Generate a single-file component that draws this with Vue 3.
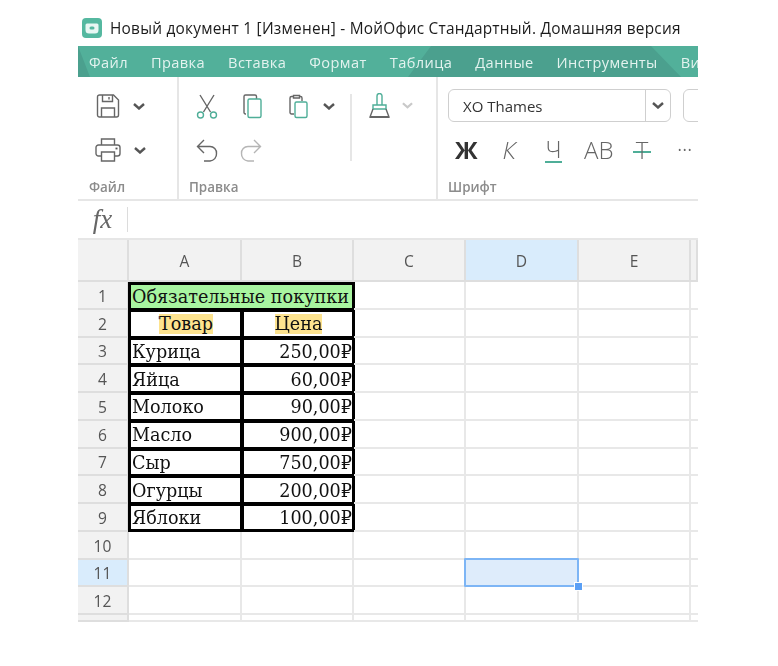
<template>
  <div class="app">
    <header class="titlebar">
      <svg class="logo" width="20" height="20" viewBox="0 0 20 20">
        <rect width="20" height="20" rx="4" fill="#55b8a0" />
        <path d="M5 5.500h10a1.500 1.500 0 0 1 1.500 1.500v5a3.500 3.500 0 0 1-3.500 3.500H7A3.500 3.500 0 0 1 3.500 12V7A1.500 1.500 0 0 1 5 5.500z" fill="#e8f7f3" />
        <rect x="7.500" y="8.500" width="5" height="3" rx="1.500" fill="#55b8a0" />
      </svg>
      <span class="doc-title">Новый документ 1 [Изменен] - МойОфис Стандартный. Домашняя версия</span>
    </header>

    <nav class="menu">
      <span v-for="item in menu" :key="item" class="menu-item">{{ item }}</span>
    </nav>

    <section class="ribbon">
      <div class="group group-file">
        <div class="tools">
          <div class="tool-row">
            <svg class="ic" width="24" height="24" viewBox="0 0 24 24" fill="none" stroke="#666" stroke-width="1.400">
              <path d="M3.500 1h14l5 5v15a2 2 0 0 1-2 2h-17a2 2 0 0 1-2-2V3a2 2 0 0 1 2-2z" />
              <path d="M6.500 1v6.500h10V1M13 3v2.500M5.500 23v-9h13v9" />
            </svg>
            <svg class="chev" width="12" height="7" viewBox="0 0 12 7" fill="none" stroke="#555" stroke-width="2.400"><path d="M1 1l5 4.500L11 1" /></svg>
          </div>
          <div class="tool-row print-row">
            <svg class="ic" width="26" height="24" viewBox="0 0 26 24" fill="none" stroke="#666" stroke-width="1.400">
              <path d="M6.500 7V1h13v6M6 18H3.500A2.500 2.500 0 0 1 1 15.500V9.500A2.500 2.500 0 0 1 3.500 7h19A2.500 2.500 0 0 1 25 9.500v6a2.500 2.500 0 0 1-2.500 2.500H20" />
              <path d="M6.500 14h13v9h-13z" />
              <path d="M20.500 10.500h2" stroke="#555" stroke-width="1.800" />
            </svg>
            <svg class="chev" width="12" height="7" viewBox="0 0 12 7" fill="none" stroke="#555" stroke-width="2.400"><path d="M1 1l5 4.500L11 1" /></svg>
          </div>
        </div>
        <span class="group-label">Файл</span>
      </div>

      <div class="group group-edit">
        <div class="tools edit-tools">
          <div class="edit-main">
            <div class="tool-row">
              <svg class="ic" width="22" height="25" viewBox="0 0 22 25" fill="none" stroke-width="1.400">
                <path d="M4 1l10.500 17M18 1L7.500 18" stroke="#666" />
                <circle cx="4.500" cy="21" r="3" stroke="#4fae98" />
                <circle cx="17.500" cy="21" r="3" stroke="#4fae98" />
              </svg>
              <svg class="ic copy-ic" width="19" height="25" viewBox="0 0 19 25" fill="none" stroke-width="1.400">
                <path d="M3 20H2.500A1.500 1.500 0 0 1 1 18.500V2.500A1.500 1.500 0 0 1 2.500 1H12a1.500 1.500 0 0 1 1.500 1.500V5" stroke="#666" />
                <rect x="5" y="5" width="13" height="18.500" rx="1.500" stroke="#4fae98" />
              </svg>
              <svg class="ic paste-ic" width="19" height="26" viewBox="0 0 19 26" fill="none" stroke-width="1.400">
                <path d="M5 21H2.500A1.500 1.500 0 0 1 1 19.500V5a1.500 1.500 0 0 1 1.500-1.500H5M10 3.500h1.500A1.500 1.500 0 0 1 13 5v3" stroke="#666" />
                <path d="M4.500 5V2.500h6V5z" stroke="#666" />
                <rect x="6" y="9" width="12" height="15.500" rx="1.500" stroke="#4fae98" />
              </svg>
              <svg class="chev paste-chev" width="12" height="7" viewBox="0 0 12 7" fill="none" stroke="#555" stroke-width="2.400"><path d="M1 1l5 4.500L11 1" /></svg>
            </div>
            <div class="tool-row">
              <svg class="ic" width="22" height="23" viewBox="0 0 22 23" fill="none" stroke="#666" stroke-width="1.400">
                <path d="M8 1L1.500 7.500 8 14M1.500 7.500H14a6.500 6.500 0 0 1 6.500 7A7 7 0 0 1 14 22H8" />
              </svg>
              <svg class="ic redo-ic" width="22" height="23" viewBox="0 0 22 23" fill="none" stroke="#b5b5b5" stroke-width="1.400">
                <path d="M14 1l6.500 6.500L14 14M20.500 7.500H8a6.500 6.500 0 0 0-6.500 7A7 7 0 0 0 8 22h6" />
              </svg>
            </div>
          </div>
          <span class="edit-sep"></span>
          <div class="edit-side">
            <svg class="ic" width="21" height="25" viewBox="0 0 21 25" fill="none" stroke-width="1.400">
              <path d="M8 12V3a2.500 2.500 0 0 1 5 0v9" stroke="#4fae98" />
              <path d="M4 12h13v4H4z" stroke="#4fae98" />
              <path d="M4 16l-3 8h19l-3-8" stroke="#666" />
              <path d="M1 24h19" stroke="#666" stroke-width="2" />
            </svg>
            <svg class="chev" width="11" height="7" viewBox="0 0 12 7" fill="none" stroke="#c9c9c9" stroke-width="2.400"><path d="M1 1l5 4.500L11 1" /></svg>
          </div>
        </div>
        <span class="group-label">Правка</span>
      </div>

      <div class="group group-font">
        <div class="tools">
          <div class="combo-row">
            <div class="combo">
              <span class="combo-text">XO Thames</span>
              <span class="combo-btn">
                <svg width="12" height="7" viewBox="0 0 12 7" fill="none" stroke="#555" stroke-width="2.400"><path d="M1 1l5 4.500L11 1" /></svg>
              </span>
            </div>
            <div class="combo combo-size"></div>
          </div>
          <div class="format-row">
            <span class="fmt fmt-b">Ж</span>
            <span class="fmt fmt-i">К</span>
            <span class="fmt fmt-u">Ч</span>
            <span class="fmt fmt-c">АВ</span>
            <span class="fmt fmt-s">Т</span>
            <span class="fmt fmt-more">•••</span>
          </div>
        </div>
        <span class="group-label">Шрифт</span>
      </div>
    </section>

    <div class="formula">
      <span class="fx">fx</span>
      <span class="fx-sep"></span>
    </div>

    <div class="sheet">
      <div class="corner"></div>
      <div v-for="c in columns" :key="c" class="col-head" :class="{ on: c === 'D' }">{{ c }}</div>

      <template v-for="n in 13" :key="n">
        <div class="row-head" :class="{ on: n === 11 }">{{ n < 13 ? n : '' }}</div>

        <template v-if="n === 1">
          <div class="cell tb top left right title-cell"><span>Обязательные покупки</span></div>
        </template>
        <template v-else-if="n === 2">
          <div class="cell tb left center"><span class="mark">Товар</span></div>
          <div class="cell tb right center"><span class="mark">Цена</span></div>
        </template>
        <template v-else-if="n <= 9">
          <div class="cell tb left" :class="{ bottom: n === 9 }">{{ goods[n - 3][0] }}</div>
          <div class="cell tb right num" :class="{ bottom: n === 9 }">{{ goods[n - 3][1] }}</div>
        </template>
        <template v-else>
          <div class="cell"></div>
          <div class="cell"></div>
        </template>

        <div class="cell"></div>
        <div class="cell" :class="{ selected: n === 11 }">
          <i v-if="n === 11" class="handle"></i>
        </div>
        <div class="cell"></div>
        <div class="cell cut"></div>
      </template>
    </div>
  </div>
</template>

<script setup>
const menu = ['Файл', 'Правка', 'Вставка', 'Формат', 'Таблица', 'Данные', 'Инструменты', 'Ви']
const columns = ['A', 'B', 'C', 'D', 'E', '']

const goods = [
  ['Курица', '250,00₽'],
  ['Яйца', '60,00₽'],
  ['Молоко', '90,00₽'],
  ['Масло', '900,00₽'],
  ['Сыр', '750,00₽'],
  ['Огурцы', '200,00₽'],
  ['Яблоки', '100,00₽']
]
</script>

<style>
html,
body {
  margin: 0;
  background: #fff;
}
</style>

<style scoped>
.app {
  width: 620px;
  height: 621px;
  margin-left: 78px;
  padding-top: 10px;
  overflow: hidden;
  font-family: "Open Sans", "Noto Sans", sans-serif;
  color: #333;
  filter: blur(0.35px);
}

.titlebar {
  height: 36px;
  display: flex;
  align-items: center;
  padding-left: 4px;
  gap: 8px;
}

.doc-title {
  font-size: 15.4px;
  letter-spacing: 0.24px;
  color: #1c1c1c;
  white-space: nowrap;
}

.menu {
  position: relative;
  height: 31px;
  display: flex;
  align-items: center;
  padding-left: 11px;
  gap: 23px;
  overflow: hidden;
  white-space: nowrap;
  color: #e3f3ef;
  font-size: 14.6px;
  letter-spacing: 0.4px;
  background: #52b09a;
}

/* darker strip of the menu with slanted ends */
.menu::before {
  content: "";
  position: absolute;
  inset: 0;
  background: #4ba08e;
  clip-path: polygon(0 0, 12px 100%, 330px 100%, 353px 0, 573px 0, 603px 100%, 0 100%);
}

.menu-item {
  position: relative;
}

.ribbon {
  height: 122px;
  display: flex;
  border-bottom: 2px solid #e6e6e6;
  overflow: hidden;
}

.group {
  display: flex;
  flex-direction: column;
  flex: none;
  box-sizing: border-box;
  border-right: 2px solid #e6e6e6;
}

.group-file {
  width: 101px;
  padding-left: 11px;
}

.group-edit {
  width: 259px;
  padding-left: 10px;
}

.group-font {
  flex: 1;
  min-width: 0;
  border-right: 0;
  padding-left: 10px;
}

.tools {
  height: 101px;
}

.group-file .tools {
  padding-left: 7px;
}

.tool-row {
  height: 44px;
  display: flex;
  align-items: center;
}

.tool-row:first-child {
  margin-top: 7px;
}

.group-file .chev {
  margin-left: 13px;
}

.print-row {
  margin-left: -1px;
}

.edit-tools {
  display: flex;
}

.edit-main {
  width: 161px;
  box-sizing: border-box;
  padding-left: 7px;
  flex: none;
}

.edit-sep {
  width: 2px;
  height: 67px;
  margin-top: 17px;
  background: #e6e6e6;
  flex: none;
}

.copy-ic {
  margin-left: 25px;
}

.paste-ic {
  margin-left: 27px;
}

.paste-chev {
  margin-left: 15px;
}

.redo-ic {
  margin-left: 22px;
}

.edit-side {
  display: flex;
  align-items: center;
  height: 25px;
  margin-top: 16px;
  margin-left: 17px;
  gap: 12px;
}

.group-label {
  font-size: 13.4px;
  font-weight: 600;
  color: #8c8c8c;
  line-height: 18px;
}

.combo-row {
  display: flex;
  gap: 12px;
  margin-top: 12px;
}

.combo {
  width: 223px;
  height: 33px;
  box-sizing: border-box;
  flex: none;
  display: flex;
  align-items: center;
  justify-content: space-between;
  border: 1px solid #cfcfcf;
  border-radius: 6px;
}

.combo-text {
  padding-left: 14px;
  font-size: 15px;
  color: #333;
}

.combo-btn {
  width: 24px;
  height: 100%;
  display: flex;
  align-items: center;
  justify-content: center;
  border-left: 1px solid #cfcfcf;
}

.combo-size {
  width: 60px;
}

.format-row {
  display: flex;
  align-items: center;
  height: 42px;
  margin-top: 7px;
  white-space: nowrap;
}

.fmt {
  display: block;
  text-align: center;
  line-height: 26px;
  color: #666;
  font-size: 24px;
  flex: none;
}

.fmt-b {
  width: 20px;
  margin-left: 7px;
  font-weight: 700;
  color: #333;
}

.fmt-i {
  width: 16px;
  margin-left: 26px;
  font-style: italic;
  font-weight: 300;
}

.fmt-u {
  width: 17px;
  margin-left: 28px;
  font-weight: 300;
  border-bottom: 2px solid #4fae98;
  line-height: 24px;
}

.fmt-c {
  width: 28px;
  margin-left: 22px;
  font-weight: 300;
}

.fmt-s {
  width: 18px;
  margin-left: 21px;
  font-weight: 300;
  background: linear-gradient(#4fae98, #4fae98) center 14px / 100% 2px no-repeat;
}

.fmt-more {
  margin-left: 27px;
  font-size: 9px;
  letter-spacing: 1.6px;
}

.formula {
  height: 37px;
  display: flex;
  align-items: center;
  border-bottom: 2px solid #e6e6e6;
}

.fx {
  width: 49px;
  text-align: center;
  font-family: "Liberation Serif", serif;
  font-style: italic;
  font-size: 27px;
  color: #666;
}

.fx-sep {
  width: 1px;
  height: 25px;
  background: #dcdcdc;
}

.sheet {
  display: grid;
  grid-template-columns: 51px 113px 112px 112px 113px 112px 7px;
  grid-template-rows: 42px repeat(12, 27.75px) 7px;
  font-size: 15.6px;
}

.corner,
.col-head,
.row-head {
  background: #f2f2f2;
  border-right: 2px solid #dedede;
  border-bottom: 2px solid #dedede;
  box-sizing: border-box;
  display: flex;
  align-items: center;
  justify-content: center;
  color: #555;
}

.col-head {
  padding-top: 1px;
}

.row-head {
  padding-top: 2px;
}

.col-head.on,
.row-head.on {
  background: #d9ecfc;
}

.cell {
  border-right: 2px solid #e8e8e8;
  border-bottom: 2px solid #e8e8e8;
  box-sizing: border-box;
  display: flex;
  align-items: center;
  min-width: 0;
  position: relative;
}

.cut {
  border-right: 0;
}

.tb {
  border: 2px solid #000;
  padding-left: 1px;
  padding-top: 1px;
  font-family: "DejaVu Serif", serif;
  font-size: 17.6px;
  color: #111;
  white-space: nowrap;
}

.tb.top {
  border-top-width: 3px;
}

.tb.left {
  border-left-width: 3px;
  margin-left: -1px;
}

.tb.right {
  border-right-width: 3px;
  margin-right: -1px;
}

.tb.bottom {
  border-bottom-width: 3px;
}

.title-cell {
  grid-column: span 2;
  background: #a8f5a0;
}

.center {
  justify-content: center;
}

.num {
  justify-content: flex-end;
}

.mark {
  background: #fde38f;
}

.selected {
  background: #deecfb;
  border: 2px solid #7db5f5;
  border-radius: 1px;
  margin: -2px 0 0 -2px;
}

.handle {
  position: absolute;
  z-index: 1;
  right: -6px;
  bottom: -6px;
  width: 7px;
  height: 7px;
  background: #5a9ff5;
  border: 1px solid #fff;
}
</style>
